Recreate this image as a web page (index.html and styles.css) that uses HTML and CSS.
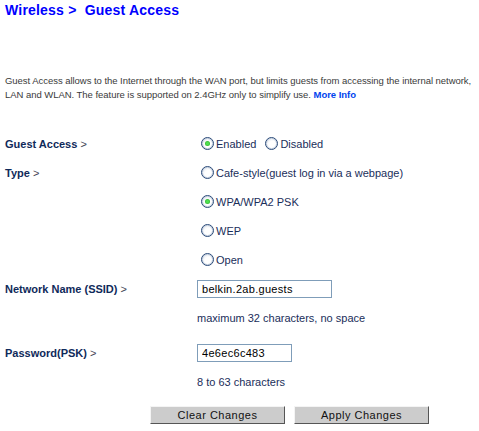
FILE: index.html
```html
<!DOCTYPE html>
<html lang="en">
<head>
<meta charset="UTF-8" />
<title>Wireless &gt; Guest Access</title>
<link rel="stylesheet" href="styles.css">
</head>
<body>

<h1 class="title">Wireless &gt;&nbsp; Guest Access</h1>

<p class="intro">Guest Access allows to the Internet through the WAN port, but limits guests from accessing the internal network,<br>
LAN and WLAN. The feature is supported on 2.4GHz only to simplify use. <a href="#" class="more">More Info</a></p>

<form class="settings">
  <div class="row">
    <div class="label">Guest Access <span class="arrow">&gt;</span></div>
    <div class="value">
      <label class="opt"><input type="radio" name="guest" checked><span class="dot"></span>Enabled</label>
      <label class="opt"><input type="radio" name="guest"><span class="dot"></span>Disabled</label>
    </div>
  </div>

  <div class="row">
    <div class="label">Type <span class="arrow">&gt;</span></div>
    <div class="value">
      <label class="opt"><input type="radio" name="type"><span class="dot"></span>Cafe-style(guest log in via a webpage)</label>
    </div>
  </div>
  <div class="row">
    <div class="label"></div>
    <div class="value">
      <label class="opt"><input type="radio" name="type" checked><span class="dot"></span>WPA/WPA2 PSK</label>
    </div>
  </div>
  <div class="row">
    <div class="label"></div>
    <div class="value">
      <label class="opt"><input type="radio" name="type"><span class="dot"></span>WEP</label>
    </div>
  </div>
  <div class="row">
    <div class="label"></div>
    <div class="value">
      <label class="opt"><input type="radio" name="type"><span class="dot"></span>Open</label>
    </div>
  </div>

  <div class="row">
    <div class="label">Network Name (SSID) <span class="arrow">&gt;</span></div>
    <div class="value"><input type="text" class="field field-wide" value="belkin.2ab.guests"></div>
  </div>
  <div class="row row-hint">
    <div class="label"></div>
    <div class="value">maximum 32 characters, no space</div>
  </div>

  <div class="row row-gap">
    <div class="label">Password(PSK) <span class="arrow">&gt;</span></div>
    <div class="value"><input type="text" class="field field-short" value="4e6ec6c483"></div>
  </div>
  <div class="row row-hint">
    <div class="label"></div>
    <div class="value">8 to 63 characters</div>
  </div>

  <div class="buttons">
    <button type="reset" class="btn">Clear Changes</button>
    <button type="submit" class="btn">Apply Changes</button>
  </div>
</form>

</body>
</html>
```

FILE: styles.css
```css
:root {
  --blue: #0000ff;
  --navy: #0f2a5a;
  --text: #1a2e5a;
  --grey: #3a3a3a;
}
body {
  margin: 0;
  padding: 0 5px;
  font-family: "Liberation Sans", Arial, sans-serif;
  background: #fff;
  color: var(--text);
}
.title {
  margin: 2px 0 0;
  font-size: 14px;
  font-weight: bold;
  letter-spacing: 0.2px;
  color: var(--blue);
  line-height: 17px;
}
.intro {
  margin: 55px 0 0;
  font-size: 9.5px;
  letter-spacing: -0.04px;
  line-height: 14px;
  color: var(--grey);
  white-space: nowrap;
}
.more {
  color: #0044ee;
  font-weight: bold;
  text-decoration: none;
}

/* settings rows */
.settings {
  margin-top: 27px;
}
.row {
  display: flex;
  align-items: center;
  height: 29px;
}
.row-hint {
  height: 30px;
}
.row-gap {
  margin-top: 5px;
}
.label {
  width: 192px;
  flex: none;
  font-size: 11px;
  font-weight: bold;
  color: var(--navy);
}
.arrow {
  font-weight: normal;
  color: #445;
}
.value {
  display: flex;
  align-items: center;
  gap: 5px;
  font-size: 11px;
  color: var(--text);
}

/* radios */
.opt {
  display: flex;
  align-items: center;
  gap: 2px;
  cursor: pointer;
}
.opt input {
  display: none;
}
.dot {
  width: 11px;
  height: 11px;
  border-radius: 50%;
  border: 1px solid #2a4a78;
  background: radial-gradient(circle at 60% 65%, #fff 40%, #d6dce6 100%);
  box-shadow: inset 0 0 0 1px #c9d3e2;
  position: relative;
  margin-left: 4px;
}
.opt input:checked + .dot::after {
  content: "";
  position: absolute;
  left: 3px;
  top: 3px;
  width: 5px;
  height: 5px;
  border-radius: 50%;
  background: radial-gradient(circle, #4fe04f 30%, #1b9a1b 100%);
}

/* text fields */
.field {
  height: 18px;
  box-sizing: border-box;
  border: 1px solid #7f9db9;
  padding: 1px 4px;
  font-family: "Liberation Sans", Arial, sans-serif;
  font-size: 11px;
  color: #000;
  letter-spacing: 0.3px;
}
.field-wide {
  width: 135px;
}
.field-short {
  width: 95px;
}

/* buttons */
.buttons {
  display: flex;
  gap: 9px;
  margin: 9px 0 0 145px;
}
.btn {
  width: 135px;
  height: 18px;
  padding: 0;
  background: #cccccc;
  border: 1px solid;
  border-color: #f4f4f4 #555 #555 #f4f4f4;
  font-family: "Liberation Sans", Arial, sans-serif;
  font-size: 11px;
  letter-spacing: 0.5px;
  color: #111;
}
```
